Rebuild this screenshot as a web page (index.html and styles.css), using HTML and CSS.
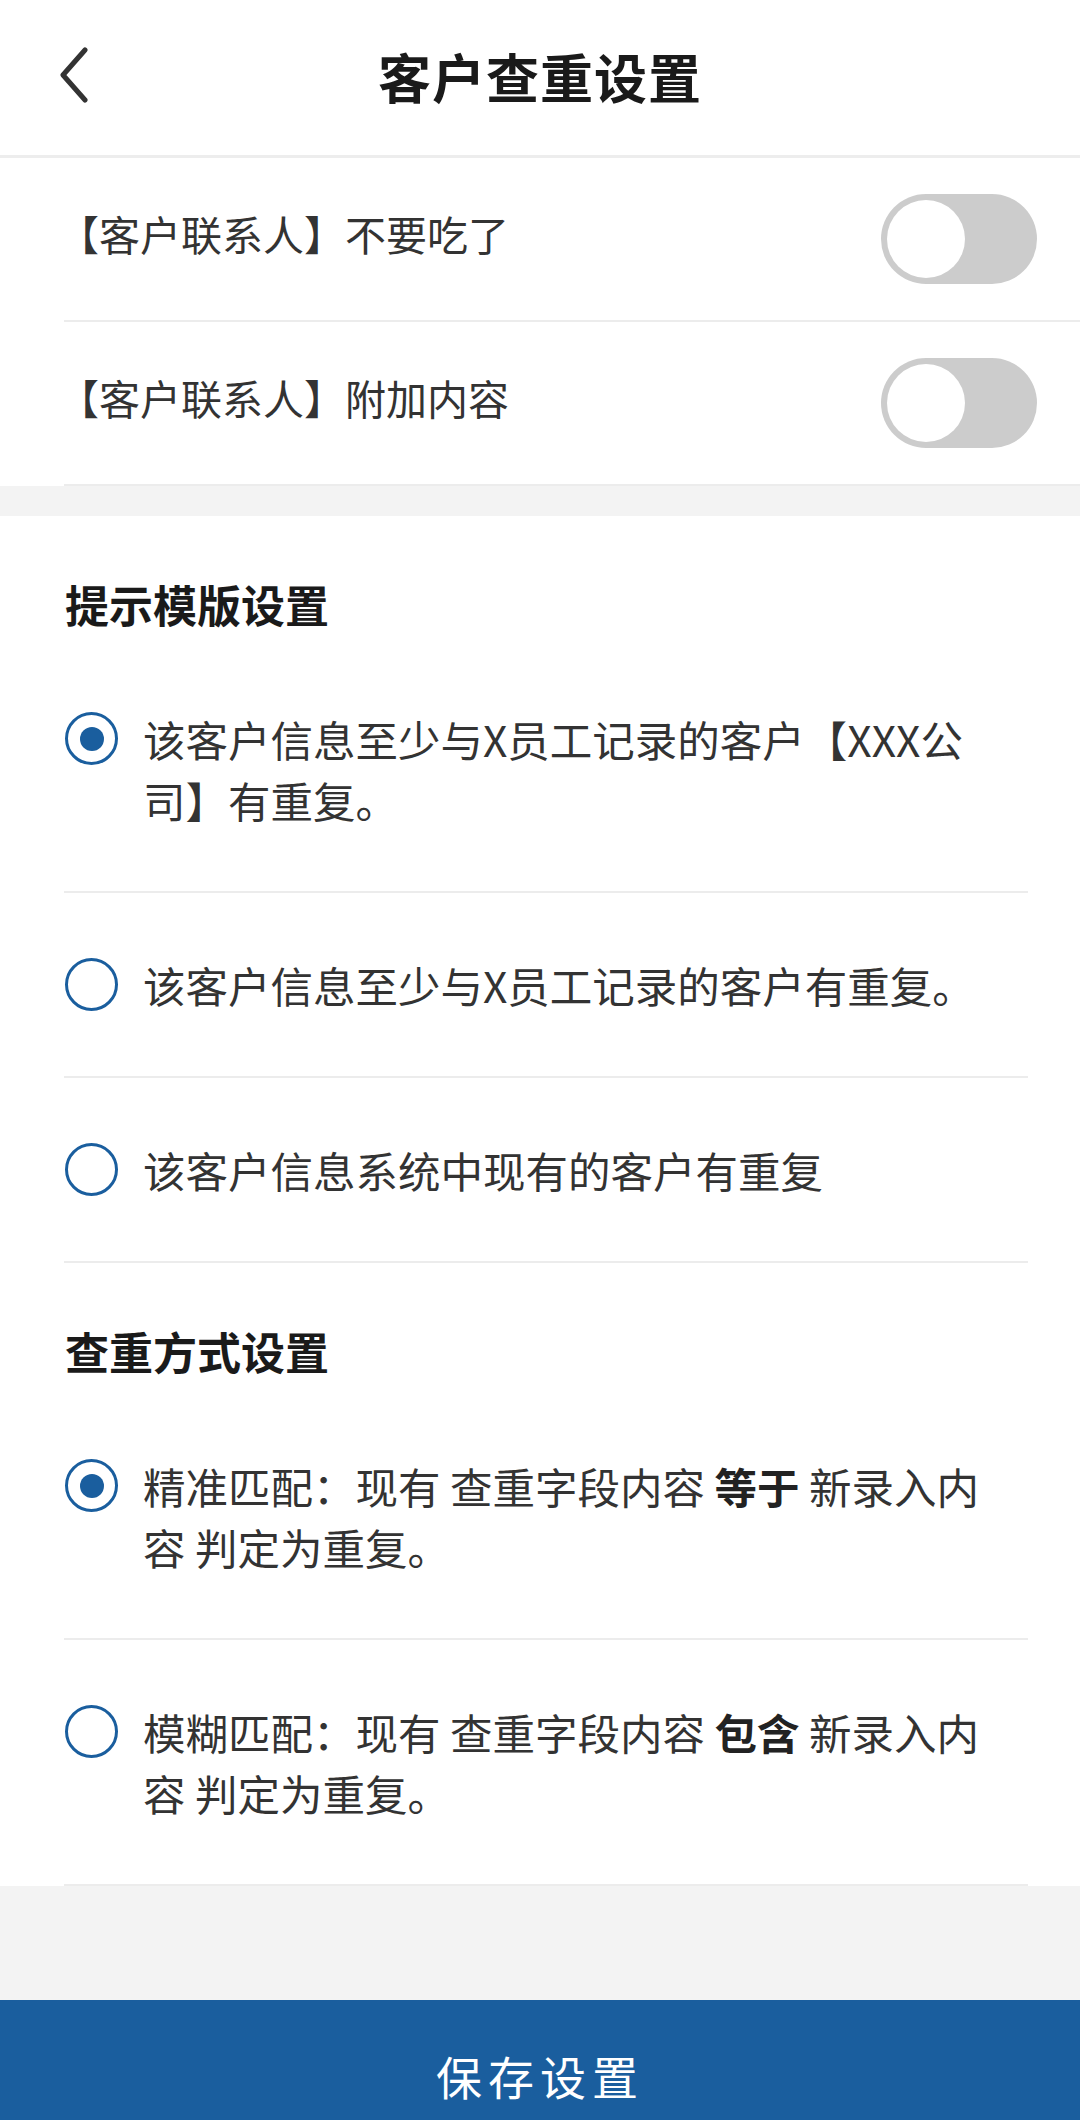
FILE: index.html
```html
<!DOCTYPE html>
<html lang="zh-CN">
<head>
<meta charset="utf-8">
<title>客户查重设置</title>
<link rel="stylesheet" href="styles.css">
</head>
<body>
<div class="page">
  <header class="topbar">
    <span class="back">
      <svg width="32" height="56" viewBox="0 0 32 56"><polyline points="28,3 6,28 28,53" fill="none" stroke="#333" stroke-width="5" stroke-linecap="round" stroke-linejoin="round"/></svg>
    </span>
    <h1 class="title">客户查重设置</h1>
  </header>

  <section class="switches">
    <div class="switch-row">
      <span class="switch-label">【客户联系人】不要吃了</span>
      <span class="toggle"><span class="knob"></span></span>
    </div>
    <div class="switch-row">
      <span class="switch-label">【客户联系人】附加内容</span>
      <span class="toggle"><span class="knob"></span></span>
    </div>
  </section>

  <section class="options">
    <h2 class="group-title">提示模版设置</h2>
    <div class="option">
      <span class="radio checked"></span>
      <span class="option-text">该客户信息至少与X员工记录的客户【XXX公司】有重复。</span>
    </div>
    <div class="option">
      <span class="radio"></span>
      <span class="option-text">该客户信息至少与X员工记录的客户有重复。</span>
    </div>
    <div class="option">
      <span class="radio"></span>
      <span class="option-text">该客户信息系统中现有的客户有重复</span>
    </div>

    <h2 class="group-title">查重方式设置</h2>
    <div class="option">
      <span class="radio checked"></span>
      <span class="option-text">精准匹配：现有 查重字段内容 <b>等于</b> 新录入内容 判定为重复。</span>
    </div>
    <div class="option">
      <span class="radio"></span>
      <span class="option-text">模糊匹配：现有 查重字段内容 <b>包含</b> 新录入内容 判定为重复。</span>
    </div>
  </section>

  <div class="spacer"></div>
  <button class="save">保存设置</button>
</div>
</body>
</html>
```

FILE: styles.css
```css
* { box-sizing: border-box; }
html, body {
  margin: 0;
  padding: 0;
  background: #f3f3f3;
  font-family: "Noto Sans CJK SC", "Noto Sans", sans-serif;
  color: #333;
}
.page {
  width: 1080px;
  height: 2120px;
  display: flex;
  flex-direction: column;
  overflow: hidden;
}
.topbar {
  position: relative;
  height: 158px;
  flex: none;
  background: #fff;
  border-bottom: 3px solid #ededed;
  display: flex;
  align-items: center;
  justify-content: center;
}
.back {
  position: absolute;
  left: 57px;
  top: 47px;
  width: 32px;
  height: 56px;
  display: block;
}
.back svg { display: block; }
.title {
  margin: 0 0 4px;
  font-size: 53px;
  line-height: 60px;
  font-weight: 700;
  color: #1a1a1a;
  letter-spacing: 1px;
}
.switches {
  background: #fff;
  flex: none;
}
.switch-row {
  margin-left: 64px;
  padding-right: 43px;
  height: 164px;
  border-bottom: 2px solid #ececec;
  display: flex;
  align-items: center;
  justify-content: space-between;
}
.switch-label {
  font-size: 41px;
  line-height: 56px;
  color: #333;
  margin-left: -6px;
  margin-bottom: 12px;
}
.toggle {
  width: 156px;
  height: 90px;
  border-radius: 45px;
  background: #cccccc;
  padding: 6px;
  display: flex;
  align-items: center;
}
.knob {
  width: 78px;
  height: 78px;
  border-radius: 50%;
  background: #fff;
}
.options {
  margin-top: 30px;
  background: #fff;
  padding: 0 52px 0 64px;
  flex: none;
}
.group-title {
  margin: 0;
  padding: 64px 0 19px 1px;
  font-size: 44px;
  line-height: 48px;
  font-weight: 700;
  color: #1a1a1a;
}
.option {
  display: flex;
  align-items: flex-start;
  padding: 61px 0;
  border-bottom: 2px solid #ececec;
}
.radio {
  flex: none;
  width: 53px;
  height: 53px;
  margin: 4px 25px 0 1px;
  border: 3px solid #1a5e9e;
  border-radius: 50%;
  display: flex;
  align-items: center;
  justify-content: center;
}
.radio.checked::after {
  content: "";
  width: 24px;
  height: 24px;
  border-radius: 50%;
  background: #1a5e9e;
}
.option-text {
  font-size: 42.5px;
  line-height: 61px;
  color: #333;
  max-width: 848px;
}
.option-text b {
  font-weight: 700;
  color: #222;
}
.spacer {
  flex: 1;
}
.save {
  flex: none;
  height: 120px;
  border: 0;
  margin: 0;
  padding: 30px 0 0;
  background: #1a5e9e;
  color: #fff;
  font-family: "Noto Sans CJK SC", "Noto Sans", sans-serif;
  font-size: 46px;
  line-height: 48px;
  letter-spacing: 6px;
  text-align: center;
}
```
